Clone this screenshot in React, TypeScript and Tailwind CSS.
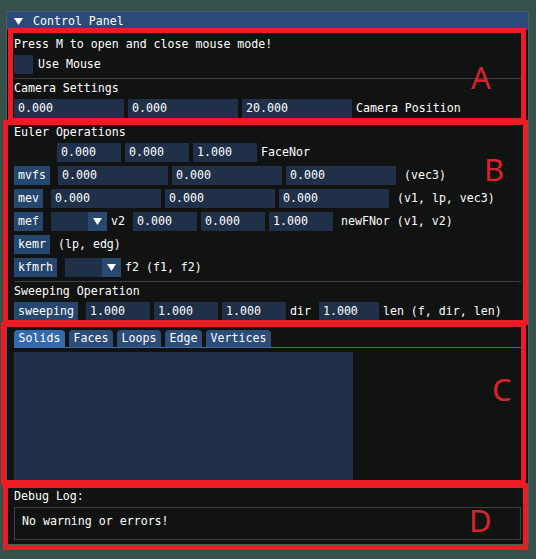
import React from "react";

const mono = "font-['DejaVu_Sans_Mono',monospace] text-[11.6px] leading-[13px] text-white";

const Input = ({ w, value }: { w: string; value: string }) => (
  <div className={`${w} h-[19px] shrink-0 bg-[#203049] pl-[4px] flex items-center`}>
    {value}
  </div>
);

const Btn = ({ w, label }: { w: string; label: string }) => (
  <div className={`${w} h-[19px] shrink-0 bg-[#25466e] flex items-center justify-center`}>
    {label}
  </div>
);

const Arrow = () => (
  <svg width="9" height="7" viewBox="0 0 9 7">
    <polygon points="0,0 9,0 4.5,7" fill="#ffffff" />
  </svg>
);

const Combo = () => (
  <div className="w-[56px] h-[19px] shrink-0 flex">
    <div className="flex-1 bg-[#203049]" />
    <div className="w-[19px] bg-[#27486f] flex items-center justify-center">
      <Arrow />
    </div>
  </div>
);

const Separator = () => <div className="h-px -mb-px bg-[#3f4049]" />;

const Row = ({ children }: { children: React.ReactNode }) => (
  <div className="h-[19px] flex items-center">{children}</div>
);

const Mark = ({ box }: { box: string }) => (
  <div className={`absolute border-[5px] border-[#ed1c24] ${box}`} />
);

const Letter = ({ pos, ch }: { pos: string; ch: string }) => (
  <div className={`absolute font-['Noto_Sans',sans-serif] text-[31px] leading-[31px] text-[#d9232b] ${pos}`}>
    {ch}
  </div>
);

export default function App() {
  const tabs = [
    { name: "Solids", w: "w-[51px]", active: true },
    { name: "Faces", w: "w-[44px]", active: false },
    { name: "Loops", w: "w-[44px]", active: false },
    { name: "Edge", w: "w-[37px]", active: false },
    { name: "Vertices", w: "w-[65px]", active: false },
  ];

  return (
    <div className="relative w-[536px] h-[559px] overflow-hidden bg-[#36504b] pt-[11px] pl-[6px]">
      <div className={`w-[523px] h-[534px] overflow-hidden border border-[#4f5c63] bg-[#111312] flex flex-col ${mono}`}>
        {/* title bar */}
        <div className="h-[18px] shrink-0 bg-[#294a7a] flex items-center pl-[7px]">
          <Arrow />
          <span className="ml-[10px]">Control Panel</span>
        </div>

        <div className="px-[7px] pt-[8px] flex flex-col gap-[4px]">
          {/* A */}
          <div>Press M to open and close mouse mode!</div>
          <Row>
            <div className="w-[19px] h-[19px] bg-[#203049]" />
            <span className="ml-[5px]">Use Mouse</span>
          </Row>
          <Separator />
          <div>Camera Settings</div>
          <Row>
            <div className="flex gap-[4px]">
              <Input w="w-[110px]" value="0.000" />
              <Input w="w-[110px]" value="0.000" />
              <Input w="w-[110px]" value="20.000" />
            </div>
            <span className="ml-[4px]">Camera Position</span>
          </Row>

          {/* B */}
          <Separator />
          <div>Euler Operations</div>
          <Row>
            <div className="ml-[43px] flex gap-[4px]">
              <Input w="w-[64px]" value="0.000" />
              <Input w="w-[64px]" value="0.000" />
              <Input w="w-[64px]" value="1.000" />
            </div>
            <span className="ml-[4px]">FaceNor</span>
          </Row>
          <Row>
            <Btn w="w-[36px]" label="mvfs" />
            <div className="ml-[8px] flex gap-[4px]">
              <Input w="w-[110px]" value="0.000" />
              <Input w="w-[110px]" value="0.000" />
              <Input w="w-[110px]" value="0.000" />
            </div>
            <span className="ml-[8px]">(vec3)</span>
          </Row>
          <Row>
            <Btn w="w-[29px]" label="mev" />
            <div className="ml-[8px] flex gap-[4px]">
              <Input w="w-[110px]" value="0.000" />
              <Input w="w-[110px]" value="0.000" />
              <Input w="w-[110px]" value="0.000" />
            </div>
            <span className="ml-[8px]">(v1, lp, vec3)</span>
          </Row>
          <Row>
            <Btn w="w-[29px]" label="mef" />
            <div className="ml-[8px]">
              <Combo />
            </div>
            <span className="ml-[4px]">v2</span>
            <div className="ml-[8px] flex gap-[4px]">
              <Input w="w-[64px]" value="0.000" />
              <Input w="w-[64px]" value="0.000" />
              <Input w="w-[64px]" value="1.000" />
            </div>
            <span className="ml-[8px]">newFNor (v1, v2)</span>
          </Row>
          <Row>
            <Btn w="w-[36px]" label="kemr" />
            <span className="ml-[8px]">(lp, edg)</span>
          </Row>
          <Row>
            <Btn w="w-[43px]" label="kfmrh" />
            <div className="ml-[8px]">
              <Combo />
            </div>
            <span className="ml-[4px]">f2 (f1, f2)</span>
          </Row>
          <Separator />
          <div>Sweeping Operation</div>
          <Row>
            <Btn w="w-[64px]" label="sweeping" />
            <div className="ml-[8px] flex gap-[4px]">
              <Input w="w-[64px]" value="1.000" />
              <Input w="w-[64px]" value="1.000" />
              <Input w="w-[64px]" value="1.000" />
            </div>
            <span className="ml-[4px]">dir</span>
            <div className="ml-[8px]">
              <Input w="w-[60px]" value="1.000" />
            </div>
            <span className="ml-[4px]">len (f, dir, len)</span>
          </Row>

          {/* C */}
          <Separator />
          <div className="h-[19px] flex items-end gap-[4px] border-b border-[#3369ad]">
            {tabs.map((t) => (
              <div
                key={t.name}
                className={`${t.w} h-[17px] rounded-t-[4px] flex items-center justify-center ${
                  t.active ? "bg-[#3369ad]" : "bg-[#2c4c7a]"
                }`}
              >
                {t.name}
              </div>
            ))}
          </div>
          <div className="w-[339px] h-[130px] bg-[#203049]" />

          {/* D */}
          <Separator />
          <div>Debug Log:</div>
          <div className="h-[33px] border border-[#3f4049] pl-[7px] pt-[7px]">No warning or errors!</div>
        </div>
      </div>

      {/* annotation boxes */}
      <Mark box="left-[8px] top-[28px] w-[518px] h-[95px]" />
      <Mark box="left-[3px] top-[120px] w-[525px] h-[205px]" />
      <Mark box="left-[1px] top-[322px] w-[525px] h-[163px]" />
      <Mark box="left-[3px] top-[483px] w-[525px] h-[67px]" />
      <Letter pos="left-[471px] top-[62px]" ch="A" />
      <Letter pos="left-[484px] top-[154px]" ch="B" />
      <Letter pos="left-[492px] top-[374px]" ch="C" />
      <Letter pos="left-[469px] top-[505px]" ch="D" />
    </div>
  );
}
